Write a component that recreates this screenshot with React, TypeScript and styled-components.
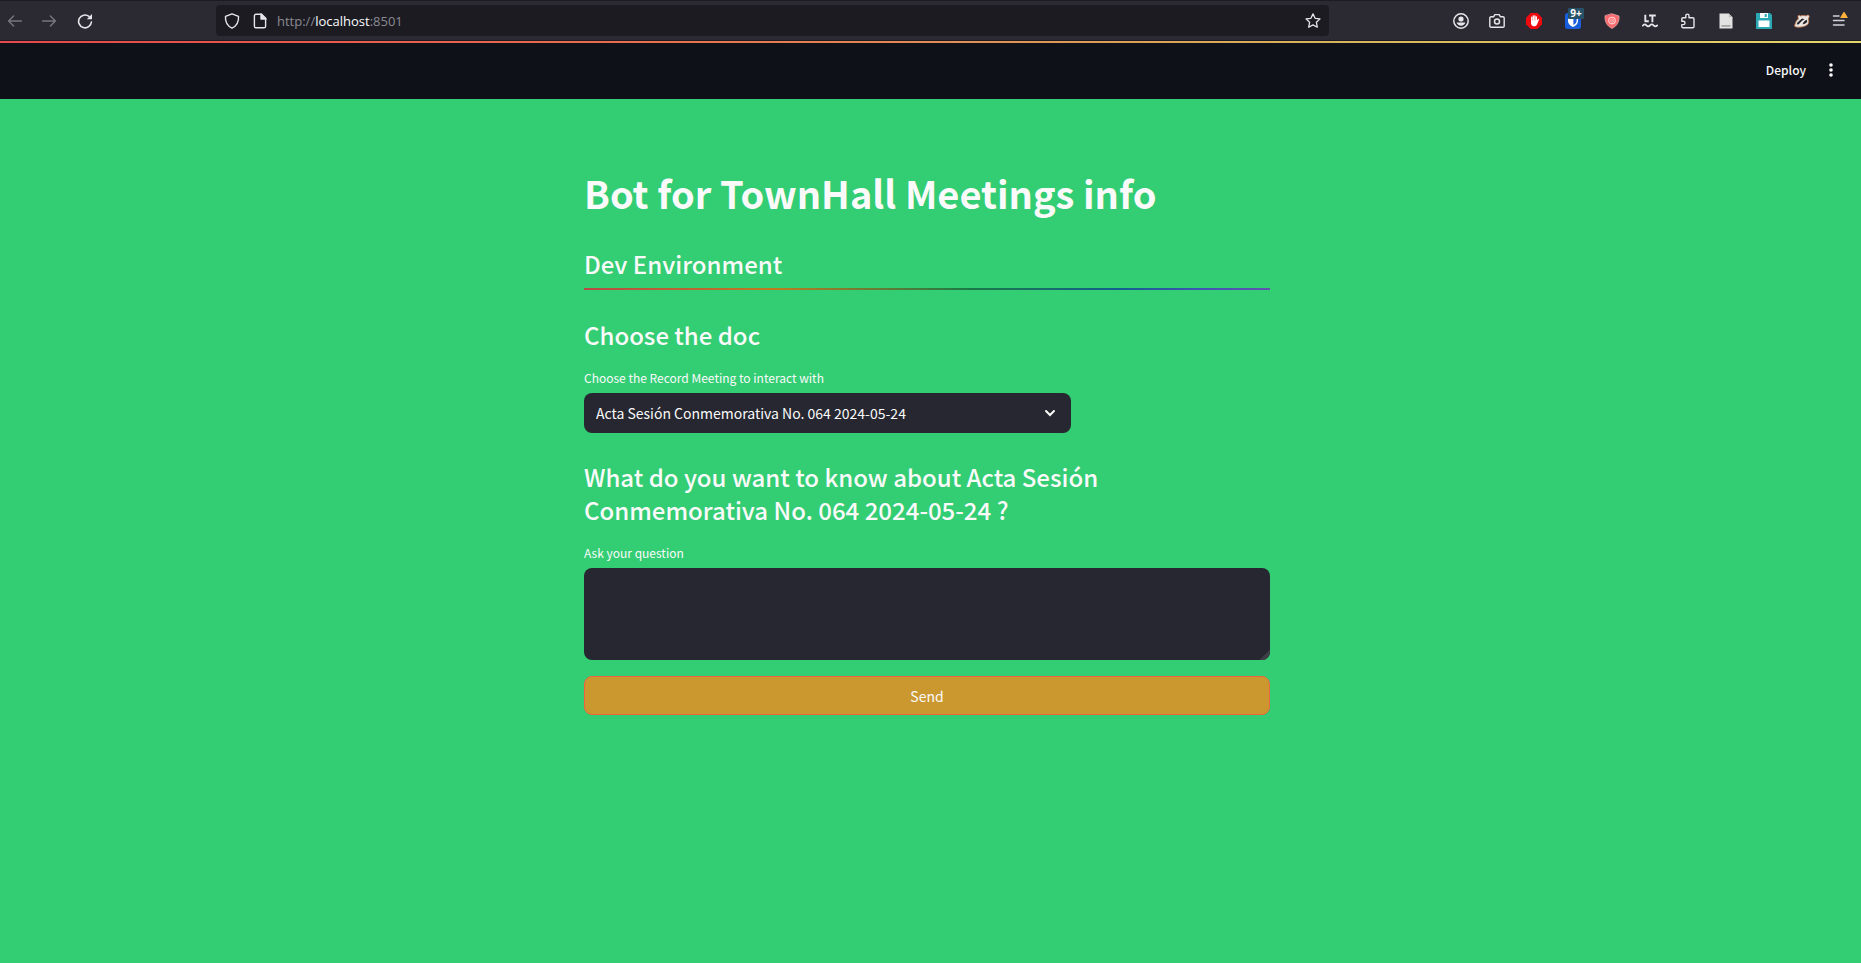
import React, { useState } from "react";
import styled, { createGlobalStyle } from "styled-components";

const GlobalStyle = createGlobalStyle`
  *, *::before, *::after { box-sizing: border-box; }
  body {
    margin: 0;
    background: #33cd74;
    font-family: "Noto Sans CJK SC", "Noto Sans", sans-serif;
    color: #fafafa;
  }
`;

const Page = styled.div`
  display: flex;
  flex-direction: column;
  min-height: 100vh;
`;

const BrowserBar = styled.nav`
  display: flex;
  align-items: center;
  justify-content: space-between;
  height: 41px;
  padding: 0 2px 0 0;
  background: #2b2a33;
  border-top: 1px solid #1c1b22;
  border-bottom: 1px solid #1c1b22;
`;

const NavButtons = styled.div`
  display: flex;
  flex: 0 0 216px;
`;

const IconButton = styled.button<{ $width?: number; $dim?: boolean }>`
  display: flex;
  align-items: center;
  justify-content: center;
  position: relative;
  width: ${(p) => p.$width ?? 38}px;
  height: 32px;
  padding: 0;
  border: 0;
  background: none;
  color: ${(p) => (p.$dim ? "#77767e" : "#e6e6ea")};
`;

const AddressBar = styled.div`
  display: flex;
  align-items: center;
  flex: 0 1 1113px;
  height: 31px;
  padding: 0 2px;
  border-radius: 4px;
  background: #1c1b22;
`;

const Address = styled.div`
  flex: 1;
  padding-left: 4px;
  color: #8b8a92;
  font: 13px/20px "Open Sans", "Noto Sans", sans-serif;

  b {
    color: #fbfbfe;
    font-weight: 400;
  }
`;

const Extensions = styled.div`
  display: flex;
  flex: 1 0 auto;
  justify-content: flex-end;
`;

const CountBadge = styled.span`
  position: absolute;
  top: 3px;
  left: 15px;
  width: 16px;
  height: 11px;
  border-radius: 1px;
  background: #265166;
  color: #fff;
  font: 700 10px/11px "Open Sans", sans-serif;
  text-align: center;
`;

const AppHeader = styled.header`
  display: flex;
  align-items: center;
  justify-content: flex-end;
  height: 58px;
  padding: 0 18px 2px 0;
  background: #0e1117;
  border-top: 2px solid;
  border-image: linear-gradient(90deg, #e5484d, #e8704f 35%, #d8b25c 70%, #e3d76b) 1;
`;

const DeployButton = styled.button`
  margin-right: 7px;
  padding: 0 6px;
  border: 0;
  background: none;
  color: #fafafa;
  font: 500 12px/20px "Noto Sans CJK SC", sans-serif;
`;

const Main = styled.main`
  display: flex;
  justify-content: center;
  flex: 1;
  padding: 68px 7px 64px 0;
`;

const Column = styled.form`
  display: flex;
  flex-direction: column;
  width: 100%;
  max-width: 686px;
`;

const Title = styled.h1`
  margin: 0 0 28px;
  font-size: 38px;
  font-weight: 700;
  line-height: 52px;
`;

const Heading = styled.h2`
  margin: 0;
  font-size: 24px;
  font-weight: 500;
  line-height: 33px;
`;

const Divider = styled.hr`
  width: 100%;
  height: 2px;
  margin: 8px 0 28px;
  border: 0;
  background: linear-gradient(90deg, #b84a45, #bf7b20 28%, #1a7a45 56%, #12608f 78%, #3f55b5 90%, #6153b0);
`;

const Field = styled.div<{ $width?: string; $after: number }>`
  display: flex;
  flex-direction: column;
  position: relative;
  width: ${(p) => p.$width ?? "100%"};
  margin: 17px 0 ${(p) => p.$after}px;
`;

const Label = styled.label`
  margin-bottom: 5px;
  font-size: 12px;
  line-height: 20px;
`;

const Select = styled.select`
  appearance: none;
  width: 100%;
  height: 40px;
  padding: 0 40px 0 12px;
  border: 0;
  border-radius: 8px;
  background: #262730;
  color: #fafafa;
  font: 14px/24px "Noto Sans CJK SC", sans-serif;
`;

const SelectArrow = styled.svg`
  position: absolute;
  right: 14px;
  bottom: 13px;
  pointer-events: none;
`;

const TextArea = styled.textarea`
  width: 100%;
  height: 92px;
  padding: 12px;
  border: 0;
  border-radius: 8px;
  background: #262730;
  color: #fafafa;
  font: 14px/24px "Noto Sans CJK SC", sans-serif;
  resize: vertical;

  &::-webkit-resizer {
    border-radius: 0 0 8px 0;
    background: linear-gradient(135deg, transparent 66%, #3c3d45 66%);
  }
`;

const SendButton = styled.button`
  width: 100%;
  height: 39px;
  border: 1px solid #f0633f;
  border-radius: 8px;
  background: #cb9830;
  color: #fafafa;
  font: 14px/24px "Noto Sans CJK SC", sans-serif;
`;

const Icon = ({ children }: { children: React.ReactNode }) => (
  <svg
    width="16"
    height="16"
    viewBox="0 0 16 16"
    fill="none"
    stroke="currentColor"
    strokeWidth="1.4"
    strokeLinecap="round"
    strokeLinejoin="round"
    aria-hidden="true"
  >
    {children}
  </svg>
);

const DOCS = ["Acta Sesión Conmemorativa No. 064 2024-05-24"];

export default function App() {
  const [doc, setDoc] = useState(DOCS[0]);
  const [question, setQuestion] = useState("");

  return (
    <Page>
      <GlobalStyle />
      <BrowserBar aria-label="Browser">
        <NavButtons>
          <IconButton $width={30} $dim aria-label="Back">
            <Icon><path d="M14.400 8H1.600M6.600 3 1.600 8l5 5" /></Icon>
          </IconButton>
          <IconButton $width={38} $dim aria-label="Forward">
            <Icon><path d="M1.600 8h12.800M9.400 3l5 5-5 5" /></Icon>
          </IconButton>
          <IconButton $width={34} aria-label="Reload">
            <Icon>
              <path d="M12 3.400A6.400 6.400 0 1 0 14.400 9" strokeWidth="1.600" />
              <path d="M15 1v5.200H9.800z" fill="currentColor" stroke="none" />
            </Icon>
          </IconButton>
        </NavButtons>
        <AddressBar>
          <IconButton $width={28} aria-label="Tracking protection">
            <Icon>
              <path d="M8 .9 14.500 3.400c.4 5-1.700 9.400-6.500 11.800C3.200 12.800 1.100 8.400 1.500 3.400z" />
            </Icon>
          </IconButton>
          <IconButton $width={27} aria-label="Site information">
            <Icon>
              <path d="M4 1.200h5.600l4 4v8a1.600 1.600 0 0 1-1.600 1.600H4a1.600 1.600 0 0 1-1.600-1.600V2.800A1.600 1.600 0 0 1 4 1.200z" />
              <path d="M9 1v5h5z" fill="currentColor" />
            </Icon>
          </IconButton>
          <Address>http://<b>localhost</b>:8501</Address>
          <IconButton $width={28} aria-label="Bookmark this page">
            <Icon>
              <path d="m8 .9 2.100 4.400 4.900.6-3.600 3.400.9 4.900L8 11.900l-4.300 2.300.9-4.900L1 5.900l4.900-.6z" strokeWidth="1.300" />
            </Icon>
          </IconButton>
        </AddressBar>
        <Extensions>
          <IconButton $width={36} aria-label="Account">
            <Icon>
              <circle cx="8" cy="8" r="7.200" strokeWidth="1.500" />
              <circle cx="8" cy="6" r="2.600" fill="currentColor" stroke="none" />
              <path d="M3.600 9.600h8.800c-.4 2-2.400 3.200-4.400 3.200s-4-1.200-4.400-3.200z" fill="currentColor" stroke="none" />
            </Icon>
          </IconButton>
          <IconButton $width={36} aria-label="Screenshot">
            <Icon>
              <path d="M2 3.800h2.600l1.200-2.200h4.400l1.200 2.200H14c.7 0 1.200.5 1.200 1.200v8c0 .7-.5 1.200-1.200 1.200H2c-.7 0-1.200-.5-1.200-1.200V5c0-.7.5-1.200 1.200-1.200z" />
              <circle cx="8" cy="8.600" r="2.500" strokeWidth="1.500" />
            </Icon>
          </IconButton>
          <IconButton aria-label="Ad blocker">
            <Icon>
              <path d="M4.700 0h6.600L16 4.700v6.600L11.300 16H4.700L0 11.300V4.700z" fill="#ee0b0f" stroke="none" />
              <path d="M5.700 8.500V4.200M7.300 8V2.900M8.900 8V3M10.400 8.500V4" stroke="#fff" strokeWidth="1.300" />
              <path d="M5 7.500h6l1-1.300c.7-.5 1.300 0 1 .6l-1.900 4.500C10.500 12.700 9.500 13.300 8 13.300c-2 0-3-1.500-3-3.300z" fill="#fff" stroke="none" />
            </Icon>
          </IconButton>
          <IconButton $width={40} aria-label="Password manager, 9+ logins">
            <Icon>
              <rect width="16" height="16" rx="2.500" fill="#175ddc" stroke="none" />
              <path d="M3 2.500h10v5.500c0 3-2.500 4.800-5 6-2.500-1.200-5-3-5-6z" fill="#fff" stroke="none" />
              <path d="M8.400 4h3.200v4c0 1.800-1.600 3-3.200 4z" fill="#175ddc" stroke="none" />
            </Icon>
            <CountBadge>9+</CountBadge>
          </IconButton>
          <IconButton aria-label="Privacy shield">
            <Icon>
              <path d="m8 .8 7 2.200c.3 5.700-1.700 9.800-7 12.400C2.700 12.800.7 8.700 1 3z" fill="#fb6a6e" stroke="#e8a3a4" strokeWidth=".8" />
              <circle cx="8" cy="7.600" r="3.300" stroke="#ffd0d0" strokeWidth="1.100" />
              <path d="M9.600 6.400C8.600 5.500 6.600 6.200 6.600 7.700c.1 1.500 2.100 1.900 2.900.9v-.8H8.300" stroke="#ffd0d0" strokeWidth=".8" />
            </Icon>
          </IconButton>
          <IconButton aria-label="Grammar checker">
            <Icon>
              <path d="M3.300 1.800v6.400h3.500M7 2.500h6.800M10.400 2.500v6.700" strokeWidth="1.900" strokeLinecap="butt" />
              <path d="M.8 12.700c1.300-1.600 2.400-1.600 3.600-.3s2.400 1.300 3.600 0 2.400-1.300 3.600 0 2.300 1.300 3.600 0" strokeWidth="1.700" />
            </Icon>
          </IconButton>
          <IconButton aria-label="Extensions">
            <Icon>
              <path d="M5.800 4.800V2.700a1.600 1.600 0 0 1 3.200 0v2.100h3.800c.7 0 1.200.5 1.200 1.200v7.600c0 .7-.5 1.200-1.200 1.200H3c-.7 0-1.200-.5-1.200-1.200v-2h1.500a1.700 1.700 0 0 0 0-3.400H1.800V6c0-.7.5-1.200 1.200-1.200z" />
            </Icon>
          </IconButton>
          <IconButton aria-label="Notes">
            <Icon>
              <path d="M1.500.5h9.300l3.700 3.800v11.200h-13z" fill="#e2e2e2" stroke="none" />
              <path d="M10.800.5v3.800h3.700z" fill="#bdbdbd" stroke="none" />
              <path d="M3.500 12h9v1.800h-9z" fill="#a5a5a5" stroke="none" />
            </Icon>
          </IconButton>
          <IconButton aria-label="Save page">
            <Icon>
              <path d="M0 0h14l2 2v14H0z" fill="#2aa9b4" stroke="none" />
              <path d="M4 0h8v5H4zM2.500 7.500h11V14h-11z" fill="#fff" stroke="none" />
              <path d="M8.700 1h2v3h-2z" fill="#2aa9b4" stroke="none" />
            </Icon>
          </IconButton>
          <IconButton aria-label="Badger">
            <Icon>
              <path d="M.6 12.600 2.200 8.200 4.300 6 4 3.200c0-1.200 1.600-1.200 2.200-.2 2-.6 4-.6 6 0 .6-1 2.800-1.400 3 .2.100 1.300-.7 2-1 2.800.8 2 .7 4-.6 5.600-3 2.400-8 2.900-11.400 2.300C1.100 13.800.6 13.400.6 12.600z" fill="#ebe6e1" stroke="#c4794b" strokeWidth=".8" />
              <path d="M2.600 11.200c1.200-2.800 3-4.900 5.600-5.700l2.300.8c-2.400 1.200-4 3.300-6 5.200zM8.600 11.300c.6-2.200 2-3.900 4-4.600l.7 1.500c-.4 1.700-2.300 2.900-4.700 3.100z" fill="#26252b" stroke="none" />
              <path d="m4 8.500 3.200-2.700" stroke="#fff" strokeWidth=".8" />
            </Icon>
          </IconButton>
          <IconButton aria-label="Application menu">
            <svg width="16" height="20" viewBox="0 0 16 20" aria-hidden="true">
              <path d="M1.500 5h5.500M1.500 9.500h10.500M1.500 14h10.500" stroke="#d3d2d8" strokeWidth="1.500" strokeLinecap="round" />
              <path d="M12 1.200 15.300 6.500H8.700z" fill="#ffb13d" stroke="#ffb13d" strokeLinejoin="round" />
            </svg>
          </IconButton>
        </Extensions>
      </BrowserBar>

      <AppHeader>
        <DeployButton>Deploy</DeployButton>
        <IconButton $width={24} aria-label="Main menu">
          <Icon>
            <g fill="#fafafa" stroke="none">
              <circle cx="8" cy="3" r="1.800" />
              <circle cx="8" cy="8" r="1.800" />
              <circle cx="8" cy="13" r="1.800" />
            </g>
          </Icon>
        </IconButton>
      </AppHeader>

      <Main>
        <Column onSubmit={(e) => e.preventDefault()}>
          <Title>Bot for TownHall Meetings info</Title>
          <Heading>Dev Environment</Heading>
          <Divider />
          <Heading>Choose the doc</Heading>
          <Field $width="71%" $after={27}>
            <Label htmlFor="doc">Choose the Record Meeting to interact with</Label>
            <Select id="doc" value={doc} onChange={(e) => setDoc(e.target.value)}>
              {DOCS.map((d) => (
                <option key={d}>{d}</option>
              ))}
            </Select>
            <SelectArrow width="14" height="14" viewBox="0 0 14 14" fill="none" aria-hidden="true">
              <path d="m3 5 4 4 4-4" stroke="#fafafa" strokeWidth="2" strokeLinecap="round" />
            </SelectArrow>
          </Field>
          <Heading>{`What do you want to know about ${doc} ?`}</Heading>
          <Field $after={16}>
            <Label htmlFor="question">Ask your question</Label>
            <TextArea id="question" value={question} onChange={(e) => setQuestion(e.target.value)} />
          </Field>
          <SendButton type="submit">Send</SendButton>
        </Column>
      </Main>
    </Page>
  );
}
